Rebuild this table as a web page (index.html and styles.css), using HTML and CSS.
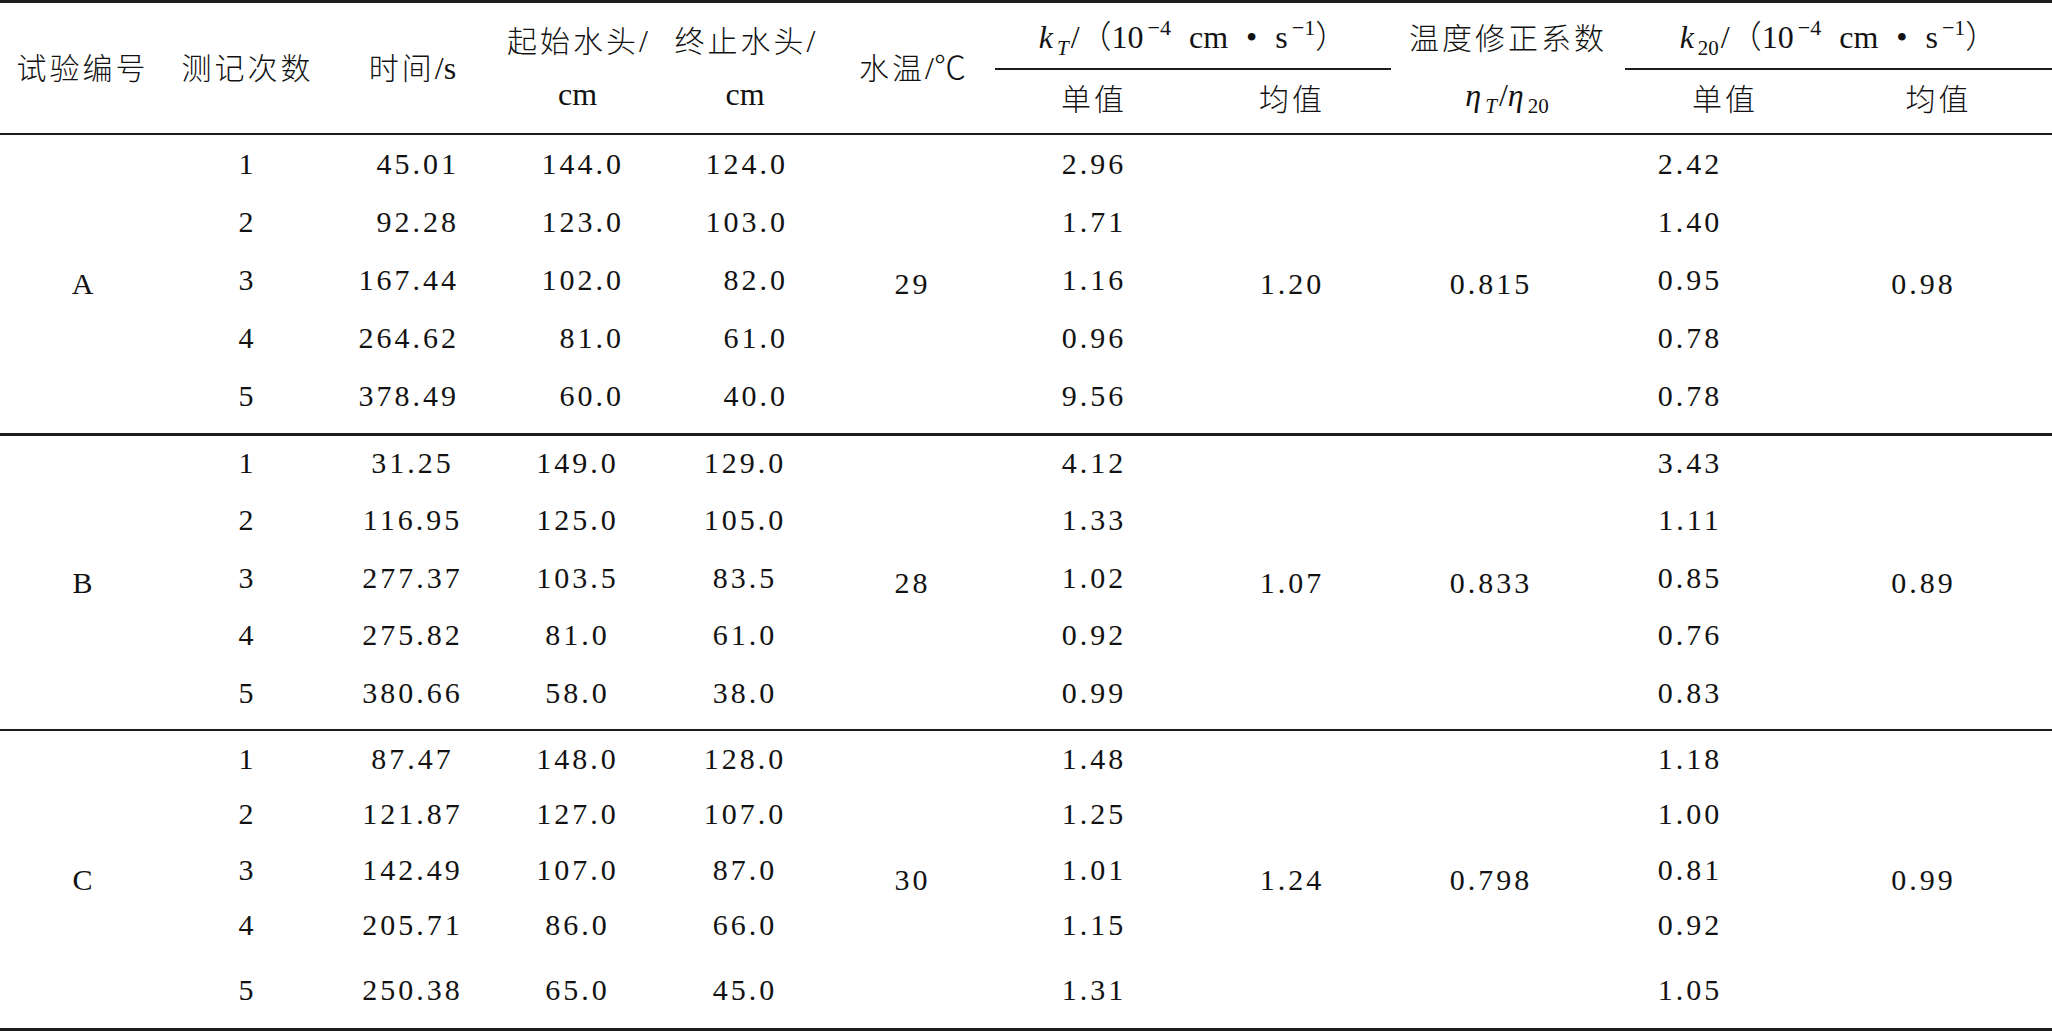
FILE: index.html
```html
<!DOCTYPE html>
<html lang="zh-CN">
<head>
<meta charset="utf-8">
<title>渗透试验结果</title>
<link rel="stylesheet" href="styles.css">
</head>
<body>
<table class="t">
  <colgroup>
    <col class="w1"><col class="w2"><col class="w3"><col class="w4"><col class="w5"><col class="w6">
    <col class="w7"><col class="w8"><col class="w9"><col class="w10"><col class="w11">
  </colgroup>
  <thead>
    <tr class="h1">
      <th rowspan="2" class="hs"><span class="cn">试验编号</span></th>
      <th rowspan="2" class="hs"><span class="cn">测记次数</span></th>
      <th rowspan="2" class="hs"><span class="cn">时间</span>/s</th>
      <th rowspan="2" class="hs two"><span class="ln"><span class="cn">起始水头</span>/</span><span class="ln">cm</span></th>
      <th rowspan="2" class="hs two"><span class="ln"><span class="cn">终止水头</span>/</span><span class="ln">cm</span></th>
      <th rowspan="2" class="hs"><span class="cn">水温</span>/℃</th>
      <th colspan="2" class="grp"><i>k</i><sub><i>T</i></sub>/（10<sup class="gap">−4</sup>cm • s<sup>−1</sup>）</th>
      <th rowspan="2" class="hs two eta"><span class="ln"><span class="cn">温度修正系数</span></span><span class="ln"><i>η</i><sub><i>T</i></sub>/<i>η</i><sub>20</sub></span></th>
      <th colspan="2" class="grp"><i>k</i><sub>20</sub>/（10<sup class="gap">−4</sup>cm • s<sup>−1</sup>）</th>
    </tr>
    <tr class="h2">
      <th><span class="cn">单值</span></th>
      <th><span class="cn">均值</span></th>
      <th><span class="cn">单值</span></th>
      <th><span class="cn">均值</span></th>
    </tr>
  </thead>
  <tbody class="blk ba">
    <tr><td rowspan="5" class="m id">A</td><td>1</td><td class="ti">45.01</td><td class="st">144.0</td><td class="en">124.0</td><td rowspan="5" class="m">29</td><td>2.96</td><td rowspan="5" class="m">1.20</td><td rowspan="5" class="m ev">0.815</td><td class="k2">2.42</td><td rowspan="5" class="m k2m">0.98</td></tr>
    <tr><td>2</td><td class="ti">92.28</td><td class="st">123.0</td><td class="en">103.0</td><td>1.71</td><td class="k2">1.40</td></tr>
    <tr><td>3</td><td class="ti">167.44</td><td class="st">102.0</td><td class="en">82.0</td><td>1.16</td><td class="k2">0.95</td></tr>
    <tr><td>4</td><td class="ti">264.62</td><td class="st">81.0</td><td class="en">61.0</td><td>0.96</td><td class="k2">0.78</td></tr>
    <tr><td>5</td><td class="ti">378.49</td><td class="st">60.0</td><td class="en">40.0</td><td>9.56</td><td class="k2">0.78</td></tr>
  </tbody>
  <tbody class="blk bb">
    <tr><td rowspan="5" class="m id">B</td><td>1</td><td class="ti">31.25</td><td class="st">149.0</td><td class="en">129.0</td><td rowspan="5" class="m">28</td><td>4.12</td><td rowspan="5" class="m">1.07</td><td rowspan="5" class="m ev">0.833</td><td class="k2">3.43</td><td rowspan="5" class="m k2m">0.89</td></tr>
    <tr><td>2</td><td class="ti">116.95</td><td class="st">125.0</td><td class="en">105.0</td><td>1.33</td><td class="k2">1.11</td></tr>
    <tr><td>3</td><td class="ti">277.37</td><td class="st">103.5</td><td class="en">83.5</td><td>1.02</td><td class="k2">0.85</td></tr>
    <tr><td>4</td><td class="ti">275.82</td><td class="st">81.0</td><td class="en">61.0</td><td>0.92</td><td class="k2">0.76</td></tr>
    <tr><td>5</td><td class="ti">380.66</td><td class="st">58.0</td><td class="en">38.0</td><td>0.99</td><td class="k2">0.83</td></tr>
  </tbody>
  <tbody class="blk bc">
    <tr><td rowspan="5" class="m id">C</td><td>1</td><td class="ti">87.47</td><td class="st">148.0</td><td class="en">128.0</td><td rowspan="5" class="m">30</td><td>1.48</td><td rowspan="5" class="m">1.24</td><td rowspan="5" class="m ev">0.798</td><td class="k2">1.18</td><td rowspan="5" class="m k2m">0.99</td></tr>
    <tr><td>2</td><td class="ti">121.87</td><td class="st">127.0</td><td class="en">107.0</td><td>1.25</td><td class="k2">1.00</td></tr>
    <tr><td>3</td><td class="ti">142.49</td><td class="st">107.0</td><td class="en">87.0</td><td>1.01</td><td class="k2">0.81</td></tr>
    <tr><td>4</td><td class="ti">205.71</td><td class="st">86.0</td><td class="en">66.0</td><td>1.15</td><td class="k2">0.92</td></tr>
    <tr><td>5</td><td class="ti">250.38</td><td class="st">65.0</td><td class="en">45.0</td><td>1.31</td><td class="k2">1.05</td></tr>
  </tbody>
</table>
</body>
</html>
```

FILE: styles.css
```css
html, body {
  margin: 0;
  padding: 0;
  background: #ffffff;
}

body {
  color: #121212;
  font-family: "Liberation Serif", "Noto Sans CJK SC", serif;
  font-size: 30px;
  font-weight: 300;
  overflow: hidden;
}

.t {
  border-collapse: separate;
  border-spacing: 0;
  table-layout: fixed;
  width: 2052px;
}

.w1 { width: 165px; }
.w2 { width: 165px; }
.w3 { width: 165px; }
.w4 { width: 165px; }
.w5 { width: 170px; }
.w6 { width: 165px; }
.w7 { width: 198px; }
.w8 { width: 198px; }
.w9 { width: 234px; }
.w10 { width: 200px; }
.w11 { width: 227px; }

th, td {
  padding: 0;
  text-align: center;
  vertical-align: middle;
  font-weight: 300;
  white-space: nowrap;
  line-height: 40px;
}

th {
  font-size: 32px;
}

.cn {
  font-size: 30px;
  letter-spacing: 3px;
}

/* header */
.h1 { height: 70px; }
.h2 { height: 65px; }

.h1 th {
  border-top: 3px solid #1c1c1c;
}

.hs {
  border-bottom: 2px solid #1c1c1c;
}

.grp {
  border-bottom: 2px solid #1c1c1c;
  padding-top: 2px;
  word-spacing: 10px;
}

.h2 th {
  border-bottom: 2px solid #1c1c1c;
  padding-bottom: 4px;
}

.two .ln {
  display: block;
  line-height: 53px;
}

.eta {
  padding-bottom: 2px;
}

.eta .ln {
  line-height: 57px;
}

sup {
  font-size: 22px;
  line-height: 0;
  vertical-align: 13px;
  margin-left: 4px;
}

sup.gap {
  margin-right: 18px;
}

sub {
  font-size: 21px;
  line-height: 0;
  vertical-align: -7px;
  margin-left: 4px;
  margin-right: 2px;
}

/* body */
td {
  letter-spacing: 3px;
}

td.id {
  letter-spacing: 0;
}

td.ev { padding-right: 34px; }
td.k2 { padding-right: 70px; }
td.k2m { padding-right: 30px; }

.ba td.ti { text-align: right; padding-right: 36px; }
.ba td.st { text-align: right; padding-right: 36px; }
.ba td.en { text-align: right; padding-right: 42px; }

.ba tr:last-child td,
.ba td.m { border-bottom: 3px solid #1c1c1c; }
.bb tr:last-child td,
.bb td.m { border-bottom: 2px solid #1c1c1c; }
.bc tr:last-child td,
.bc td.m { border-bottom: 3px solid #1c1c1c; }

.ba tr:nth-child(1) { height: 57px; }
.ba tr:nth-child(2) { height: 59px; }
.ba tr:nth-child(3) { height: 58px; }
.ba tr:nth-child(4) { height: 58px; }
.ba tr:nth-child(5) { height: 69px; }
.ba tr:nth-child(5) td { padding-bottom: 8px; }

.bb tr:nth-child(1) { height: 54px; }
.bb tr:nth-child(2) { height: 59px; }
.bb tr:nth-child(3) { height: 57px; }
.bb tr:nth-child(4) { height: 58px; }
.bb tr:nth-child(5) { height: 67px; }
.bb tr:nth-child(5) td { padding-bottom: 7px; }

.bc tr:nth-child(1) { height: 55px; }
.bc tr:nth-child(2) { height: 55px; }
.bc tr:nth-child(3) { height: 57px; }
.bc tr:nth-child(4) { height: 53px; }
.bc tr:nth-child(5) { height: 80px; }
```
